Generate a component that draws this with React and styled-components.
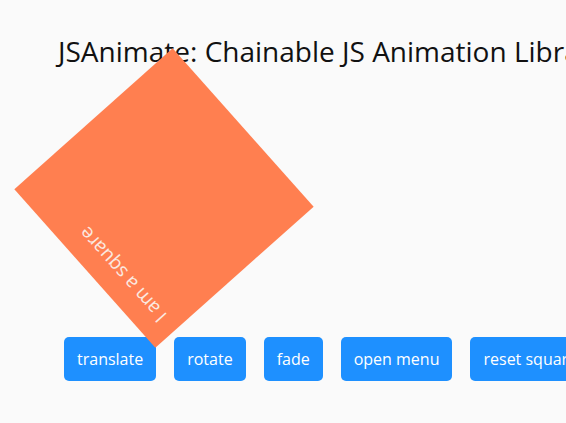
import styled, { createGlobalStyle } from "styled-components";

const GlobalStyle = createGlobalStyle`
    html, body {
        margin: 0;
        padding: 0;
        background: #fafafa;
        overflow: hidden;
        font-family: "Open Sans", "DejaVu Sans", sans-serif;
    }
`;

const Page = styled.div`
    padding: 34px 0 0 58px;
    width: 566px;
    height: 423px;
    box-sizing: border-box;
`;

const Title = styled.h1`
    margin: 0;
    font-size: 28px;
    line-height: 34px;
    font-weight: 400;
    color: #111;
    white-space: nowrap;
`;

const Square = styled.div`
    margin-top: 24px;
    width: 212px;
    height: 212px;
    box-sizing: border-box;
    padding: 11px 16px;
    background: #ff7f50;
    color: #fbe9e0;
    font-size: 19px;
    transform: rotate(228.3deg);
    position: relative;
    z-index: 1;
`;

const Buttons = styled.div`
    display: flex;
    gap: 18px;
    margin-top: 33px;
    padding-left: 6px;
    white-space: nowrap;
`;

const Button = styled.button`
    flex: none;
    height: 44px;
    padding: 0 13px;
    border: none;
    border-radius: 5px;
    background: #1e90ff;
    color: #fff;
    font-family: inherit;
    font-size: 16px;
`;

const labels = ["translate", "rotate", "fade", "open menu", "reset square"];

const App = () => {
    return (
        <Page>
            <GlobalStyle />
            <Title>JSAnimate: Chainable JS Animation Library</Title>
            <Square>I am a square</Square>
            <Buttons>
                {labels.map((l) => (
                    <Button key={l}>{l}</Button>
                ))}
            </Buttons>
        </Page>
    );
};

export default App;
